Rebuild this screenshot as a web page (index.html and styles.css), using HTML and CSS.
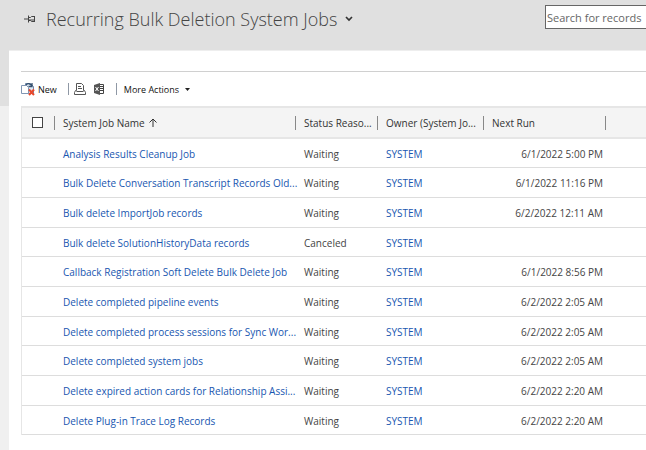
FILE: index.html
```
<!DOCTYPE html>
<html lang="en">
<head>
    <meta charset="UTF-8">
    <meta name="viewport" content="width=device-width, initial-scale=1.0">
    <title>Recurring Bulk Deletion System Jobs</title>
    <link rel="stylesheet" href="styles.css">
</head>
<body>

<header class="page-header">
    <button type="button" class="icon-btn pin-btn" aria-label="Pin view">
        <svg width="12" height="8" viewBox="0 0 12 8" fill="none" stroke="#444">
            <path d="M0 4h4M4.500 0.500v7M10.500 1v6M4.500 2.500h2l1-1h3M4.500 5.500h2l1 1h3M5 5h5"/>
        </svg>
    </button>
    <h1>Recurring Bulk Deletion System Jobs</h1>
    <button type="button" class="icon-btn view-btn" aria-label="Change view">
        <svg width="8" height="6" viewBox="0 0 8 6" fill="none" stroke="#333" stroke-width="1.7">
            <path d="M1 1l3 3 3-3"/>
        </svg>
    </button>
    <input type="text" class="search" placeholder="Search for records" aria-label="Search for records">
</header>

<main class="content">
    <div class="toolbar">
        <button type="button" class="tool new-btn">
            <svg width="14" height="14" viewBox="0 0 14 14" fill="none">
                <path d="M4.500 1.500h5l3 3v7h-8z" fill="#dfe8f3" stroke="#7389a8"/>
                <path d="M0.500 3.500h5l2 2v6h-7z" fill="#fff" stroke="#8096b4"/>
                <path d="M5 3q3-3 6 1M11 1v3.500h-3.500" stroke="#35516f" stroke-width="1.300"/>
                <path d="M8 7.500l5 5.500M13 7.500l-5 5.500" stroke="#e8472b" stroke-width="2"/>
            </svg>
            New
        </button>
        <span class="divider"></span>
        <button type="button" class="tool" aria-label="Run report">
            <svg width="12" height="12" viewBox="0 0 12 12" fill="none" stroke="#555">
                <path d="M2.500 7.500V0.500h5l2 2v5M4 3.500h3M4 5.500h4"/>
                <path d="M2.500 7.500h-1l-1 2v2h11v-2l-1-2h-1M2.500 8.500h7"/>
            </svg>
        </button>
        <button type="button" class="tool excel-btn" aria-label="Export to Excel">
            <svg width="11" height="12" viewBox="0 0 11 12" fill="none" stroke="#444">
                <path d="M0 2l6-2v12l-6-2z" fill="#555" stroke="none"/>
                <path d="M1.500 4l3 4M4.500 4l-3 4" stroke="#fff"/>
                <path d="M6 1.500h3.500v9H6M6 3.500h3M6 5.500h3M6 7.500h3"/>
            </svg>
        </button>
        <span class="divider"></span>
        <button type="button" class="tool more-btn">
            More Actions
            <svg width="5" height="3" viewBox="0 0 5 3"><path d="M0 0h5L2.500 3z" fill="#222"/></svg>
        </button>
    </div>

    <table class="grid">
        <colgroup>
            <col class="col-check">
            <col class="col-name">
            <col class="col-status">
            <col class="col-owner">
            <col class="col-run">
            <col>
        </colgroup>
        <thead>
            <tr>
                <th><input type="checkbox" class="check" aria-label="Select all records"></th>
                <th><span class="head">System Job Name
                    <svg width="8" height="9" viewBox="0 0 8 9" fill="none" stroke="#333"><path d="M4 9V1M0.500 4.500L4 1l3.500 3.500"/></svg>
                </span></th>
                <th><span class="head">Status Reaso...</span></th>
                <th><span class="head">Owner (System Jo...</span></th>
                <th><span class="head">Next Run</span></th>
                <th><span class="head"></span></th>
            </tr>
        </thead>
        <tbody>
            <tr><td></td><td><a href="#">Analysis Results Cleanup Job</a></td><td>Waiting</td><td><a href="#">SYSTEM</a></td><td class="date">6/1/2022 5:00 PM</td><td></td></tr>
            <tr><td></td><td><a href="#">Bulk Delete Conversation Transcript Records Old...</a></td><td>Waiting</td><td><a href="#">SYSTEM</a></td><td class="date">6/1/2022 11:16 PM</td><td></td></tr>
            <tr><td></td><td><a href="#">Bulk delete ImportJob records</a></td><td>Waiting</td><td><a href="#">SYSTEM</a></td><td class="date">6/2/2022 12:11 AM</td><td></td></tr>
            <tr><td></td><td><a href="#">Bulk delete SolutionHistoryData records</a></td><td>Canceled</td><td><a href="#">SYSTEM</a></td><td class="date"></td><td></td></tr>
            <tr><td></td><td><a href="#">Callback Registration Soft Delete Bulk Delete Job</a></td><td>Waiting</td><td><a href="#">SYSTEM</a></td><td class="date">6/1/2022 8:56 PM</td><td></td></tr>
            <tr><td></td><td><a href="#">Delete completed pipeline events</a></td><td>Waiting</td><td><a href="#">SYSTEM</a></td><td class="date">6/2/2022 2:05 AM</td><td></td></tr>
            <tr><td></td><td><a href="#">Delete completed process sessions for Sync Wor...</a></td><td>Waiting</td><td><a href="#">SYSTEM</a></td><td class="date">6/2/2022 2:05 AM</td><td></td></tr>
            <tr><td></td><td><a href="#">Delete completed system jobs</a></td><td>Waiting</td><td><a href="#">SYSTEM</a></td><td class="date">6/2/2022 2:05 AM</td><td></td></tr>
            <tr><td></td><td><a href="#">Delete expired action cards for Relationship Assi...</a></td><td>Waiting</td><td><a href="#">SYSTEM</a></td><td class="date">6/2/2022 2:20 AM</td><td></td></tr>
            <tr><td></td><td><a href="#">Delete Plug-in Trace Log Records</a></td><td>Waiting</td><td><a href="#">SYSTEM</a></td><td class="date">6/2/2022 2:20 AM</td><td></td></tr>
        </tbody>
    </table>
</main>

</body>
</html>
```
FILE: styles.css
```
* {
    margin: 0;
    padding: 0;
    box-sizing: border-box;
}

body {
    min-height: 100vh;
    display: flex;
    flex-direction: column;
    overflow: hidden;
    font-family: "Segoe UI", "Open Sans", sans-serif;
    font-size: 10px;
    color: #444;
    background: linear-gradient(#e0e0e0 106px, #f0f0f0 106px);
}

button {
    border: none;
    background: none;
    font: inherit;
    color: inherit;
    cursor: pointer;
}

svg {
    display: block;
    flex: none;
}

/* Header */
.page-header {
    display: flex;
    align-items: center;
    height: 50px;
    padding: 0 0 12px 24px;
}

.page-header h1 {
    margin: 0 8px 0 10px;
    font-size: 18px;
    font-weight: 300;
    white-space: nowrap;
    color: #444;
}

.search {
    flex: none;
    width: 120px;
    height: 24px;
    margin: -4px -19px 0 auto;
    padding: 0 1px;
    border: 1px solid #666;
    font: inherit;
    font-size: 11px;
    background: #fff;
}

.search::placeholder {
    color: #666;
}

/* Content */
.content {
    flex: 1;
    margin-left: 9px;
    padding: 20px 0 0 12px;
    border-top: 1px solid #eee;
    background: #fff;
}

.toolbar {
    display: flex;
    align-items: center;
    height: 35px;
    border-top: 1px solid #d0d0d0;
    font-size: 9px;
    color: #111;
}

.tool {
    display: flex;
    align-items: center;
    gap: 3px;
    white-space: nowrap;
}

.divider {
    width: 1px;
    height: 12px;
    margin: 0 5px 0 11px;
    background: #8f98a5;
}

.excel-btn {
    margin-left: 8px;
}

.more-btn {
    gap: 6px;
    margin-left: 2px;
}

/* Records grid */
.grid {
    width: 100%;
    table-layout: fixed;
    border-collapse: separate;
    border-spacing: 0;
    border-top: 2px solid #e6e6e6;
    border-left: 1px solid #e6e6e6;
}

.col-check { width: 32px; }
.col-name { width: 241px; }
.col-status { width: 82px; }
.col-owner { width: 106px; }
.col-run { width: 122px; }

.grid th {
    height: 31px;
    border-bottom: 2px solid #e6e6e6;
    background: #f4f4f4;
    font-weight: 500;
    text-align: left;
    color: #333;
}

.head {
    display: flex;
    align-items: center;
    gap: 4px;
    height: 14px;
    padding-left: 8px;
    border-left: 1px solid #888;
    white-space: nowrap;
}

.check {
    appearance: none;
    display: block;
    width: 11px;
    height: 11px;
    margin-left: 10px;
    border: 1px solid #444;
    background: #fff;
}

.check:checked {
    background: #1160b7;
}

.grid td {
    height: 30px;
    padding: 1px 0 0 9px;
    border-bottom: 1px solid #ddd;
    white-space: nowrap;
}

.grid tr:nth-child(3n+1) td {
    height: 29px;
}

.grid td.date {
    padding: 1px 2px 0 0;
    text-align: right;
}

.grid a {
    color: #1856b0;
    text-decoration: none;
}

.grid a:hover {
    text-decoration: underline;
}
```
